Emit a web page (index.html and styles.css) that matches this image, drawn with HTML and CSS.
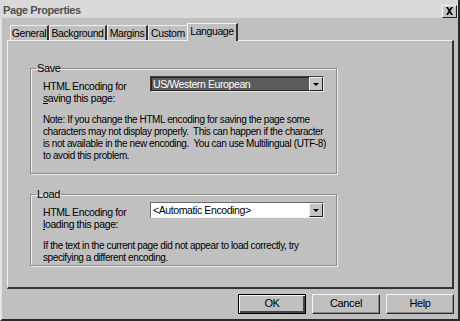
FILE: index.html
```html
<!DOCTYPE html>
<html lang="en">
<head>
  <meta charset="UTF-8" />
  <title>Page Properties</title>
  <link rel="stylesheet" href="styles.css">
</head>
<body>
  <div id="dialog">
    <div id="titlebar">
      <span class="title">Page Properties</span>
      <span class="close-btn">
        <svg width="9" height="8" viewBox="0 0 9 8"><path d="M1 0h2l1.5 2.5L6 0h2L5.5 4L8 8H6L4.5 5.5L3 8H1l2.5-4z" fill="#000"/></svg>
      </span>
    </div>

    <div id="tabs">
      <div class="tab t-general">General</div>
      <div class="tab t-background">Background</div>
      <div class="tab t-margins">Margins</div>
      <div class="tab t-custom">Custom</div>
      <div class="tab active">Language</div>
    </div>

    <div id="panel">
      <fieldset class="group save">
        <legend>Save</legend>
        <div class="row">
          <div class="label">HTML Encoding for<br><u>s</u>aving this page:</div>
          <div class="combo focused">
            <span class="value">US/Western European</span>
            <span class="arrow"></span>
          </div>
        </div>
        <p class="note">Note: If you change the HTML encoding for saving the page some<br>characters may not display properly.&nbsp; This can happen if the character<br>is not available in the new encoding.&nbsp; You can use Multilingual (UTF-8)<br>to avoid this problem.</p>
      </fieldset>

      <fieldset class="group load">
        <legend>Load</legend>
        <div class="row">
          <div class="label">HTML Encoding for<br><u>l</u>oading this page:</div>
          <div class="combo">
            <span class="value">&lt;Automatic Encoding&gt;</span>
            <span class="arrow"></span>
          </div>
        </div>
        <p class="note">If the text in the current page did not appear to load correctly, try<br>specifying a different encoding.</p>
      </fieldset>
    </div>

    <div id="buttons">
      <div class="btn default">OK</div>
      <div class="btn">Cancel</div>
      <div class="btn">Help</div>
    </div>
  </div>
</body>
</html>
```

FILE: styles.css
```css
body {
  margin: 0;
  padding: 0;
  background-color: #c0c0c0;
  font-family: "Liberation Sans", Arial, sans-serif;
  font-size: 10.5px;
  letter-spacing: -0.4px;
  color: #000;
}

#dialog {
  width: 460px;
  height: 321px;
  box-sizing: border-box;
  background-color: #c0c0c0;
  border-left: 2px solid #e4e4e4;
  border-right: 2px solid #2a2a2a;
  border-bottom: 2px solid #2a2a2a;
  display: flex;
  flex-direction: column;
}

#titlebar {
  height: 18px;
  background-color: #dadada;
  display: flex;
  align-items: center;
  justify-content: space-between;
  padding: 0 1px 0 2px;
  margin-left: -2px;
}

.title {
  font-weight: bold;
  font-size: 11px;
  letter-spacing: -0.4px;
  color: #505050;
  padding-top: 2px;
  padding-left: 1px;
}

.close-btn {
  width: 15px;
  height: 13px;
  box-sizing: border-box;
  background-color: #c6c6c6;
  border: 1px solid;
  border-color: #f4f4f4 #222 #222 #f4f4f4;
  display: flex;
  align-items: center;
  justify-content: center;
  margin-top: 4px;
}

#tabs {
  display: flex;
  align-items: flex-end;
  height: 22px;
  padding-left: 8px;
}

.tab {
  height: 16px;
  box-sizing: border-box;
  text-align: center;
  line-height: 15px;
  border-top: 1px solid #eee;
  border-left: 1px solid #eee;
  border-right: 2px solid #333;
  margin-bottom: -1px;
  white-space: nowrap;
}

.t-general { width: 39px; }
.t-background { width: 58px; }
.t-margins { width: 41px; }
.t-custom { width: 41px; }

.tab.active {
  width: 51px;
  height: 18px;
  padding-bottom: 1px;
  margin-left: -2px;
  margin-bottom: -1px;
  background-color: #c0c0c0;
  border-top: 1px solid #f2f2f2;
  border-left: 1px solid #f2f2f2;
  position: relative;
  z-index: 1;
}

#panel {
  margin: 0 4px 0 5px;
  height: 249px;
  box-sizing: border-box;
  border-top: 1px solid #f0f0f0;
  border-left: 1px solid #f0f0f0;
  border-right: 2px solid #333;
  border-bottom: 2px solid #333;
  padding: 21px 0 0 22px;
}

.group {
  width: 307px;
  margin: 0;
  padding: 4px 0 0 12px;
  box-sizing: border-box;
  border: 1px solid #8c8c8c;
  box-shadow: inset 1px 1px 0 #ececec, 1px 1px 0 #ececec;
}

.group.save {
  height: 112px;
}

.group.load {
  height: 78px;
  margin-top: 14px;
}

legend {
  padding: 0 1px;
  margin-left: -7px;
  font-size: 11px;
}

.row {
  display: flex;
  align-items: flex-start;
}

.label {
  width: 107px;
  line-height: 12px;
  padding-top: 2px;
  font-size: 10.5px;
}

.combo {
  width: 174px;
  height: 16px;
  box-sizing: border-box;
  border: 1px solid;
  border-color: #6a6a6a #f4f4f4 #f4f4f4 #6a6a6a;
  background-color: #fff;
  display: flex;
  align-items: center;
  justify-content: space-between;
  margin-top: -2px;
}

.combo .value {
  padding-left: 2px;
  font-size: 10.5px;
}

.combo.focused {
  background-color: #5c5c5c;
  border-color: #404040 #e8e8e8 #e8e8e8 #404040;
  box-shadow: inset 0 0 0 1px #222;
}

.combo.focused .value {
  color: #fff;
  margin-left: 1px;
  padding-left: 1px;
}

.arrow {
  width: 14px;
  height: 14px;
  box-sizing: border-box;
  background-color: #c4c4c4;
  border: 1px solid;
  border-color: #f2f2f2 #222 #222 #f2f2f2;
  position: relative;
}

.arrow::after {
  content: "";
  position: absolute;
  left: 3px;
  top: 5px;
  border-left: 3px solid transparent;
  border-right: 3px solid transparent;
  border-top: 3px solid #000;
}

.note {
  margin: 10px 0 0;
  line-height: 12px;
  font-size: 10px;
  white-space: nowrap;
}

#buttons {
  display: flex;
  justify-content: flex-end;
  gap: 6px;
  padding: 5px 4px 0 0;
}

.btn {
  width: 68px;
  height: 20px;
  box-sizing: border-box;
  text-align: center;
  line-height: 17px;
  font-size: 11px;
  border: 1px solid;
  border-color: #f4f4f4 #2a2a2a #2a2a2a #f4f4f4;
  box-shadow: inset -1px -1px 0 #888;
}

.btn.default {
  border: 1px solid #000;
  box-shadow: inset 1px 1px 0 #f4f4f4, inset -2px -2px 0 #444;
}
```
